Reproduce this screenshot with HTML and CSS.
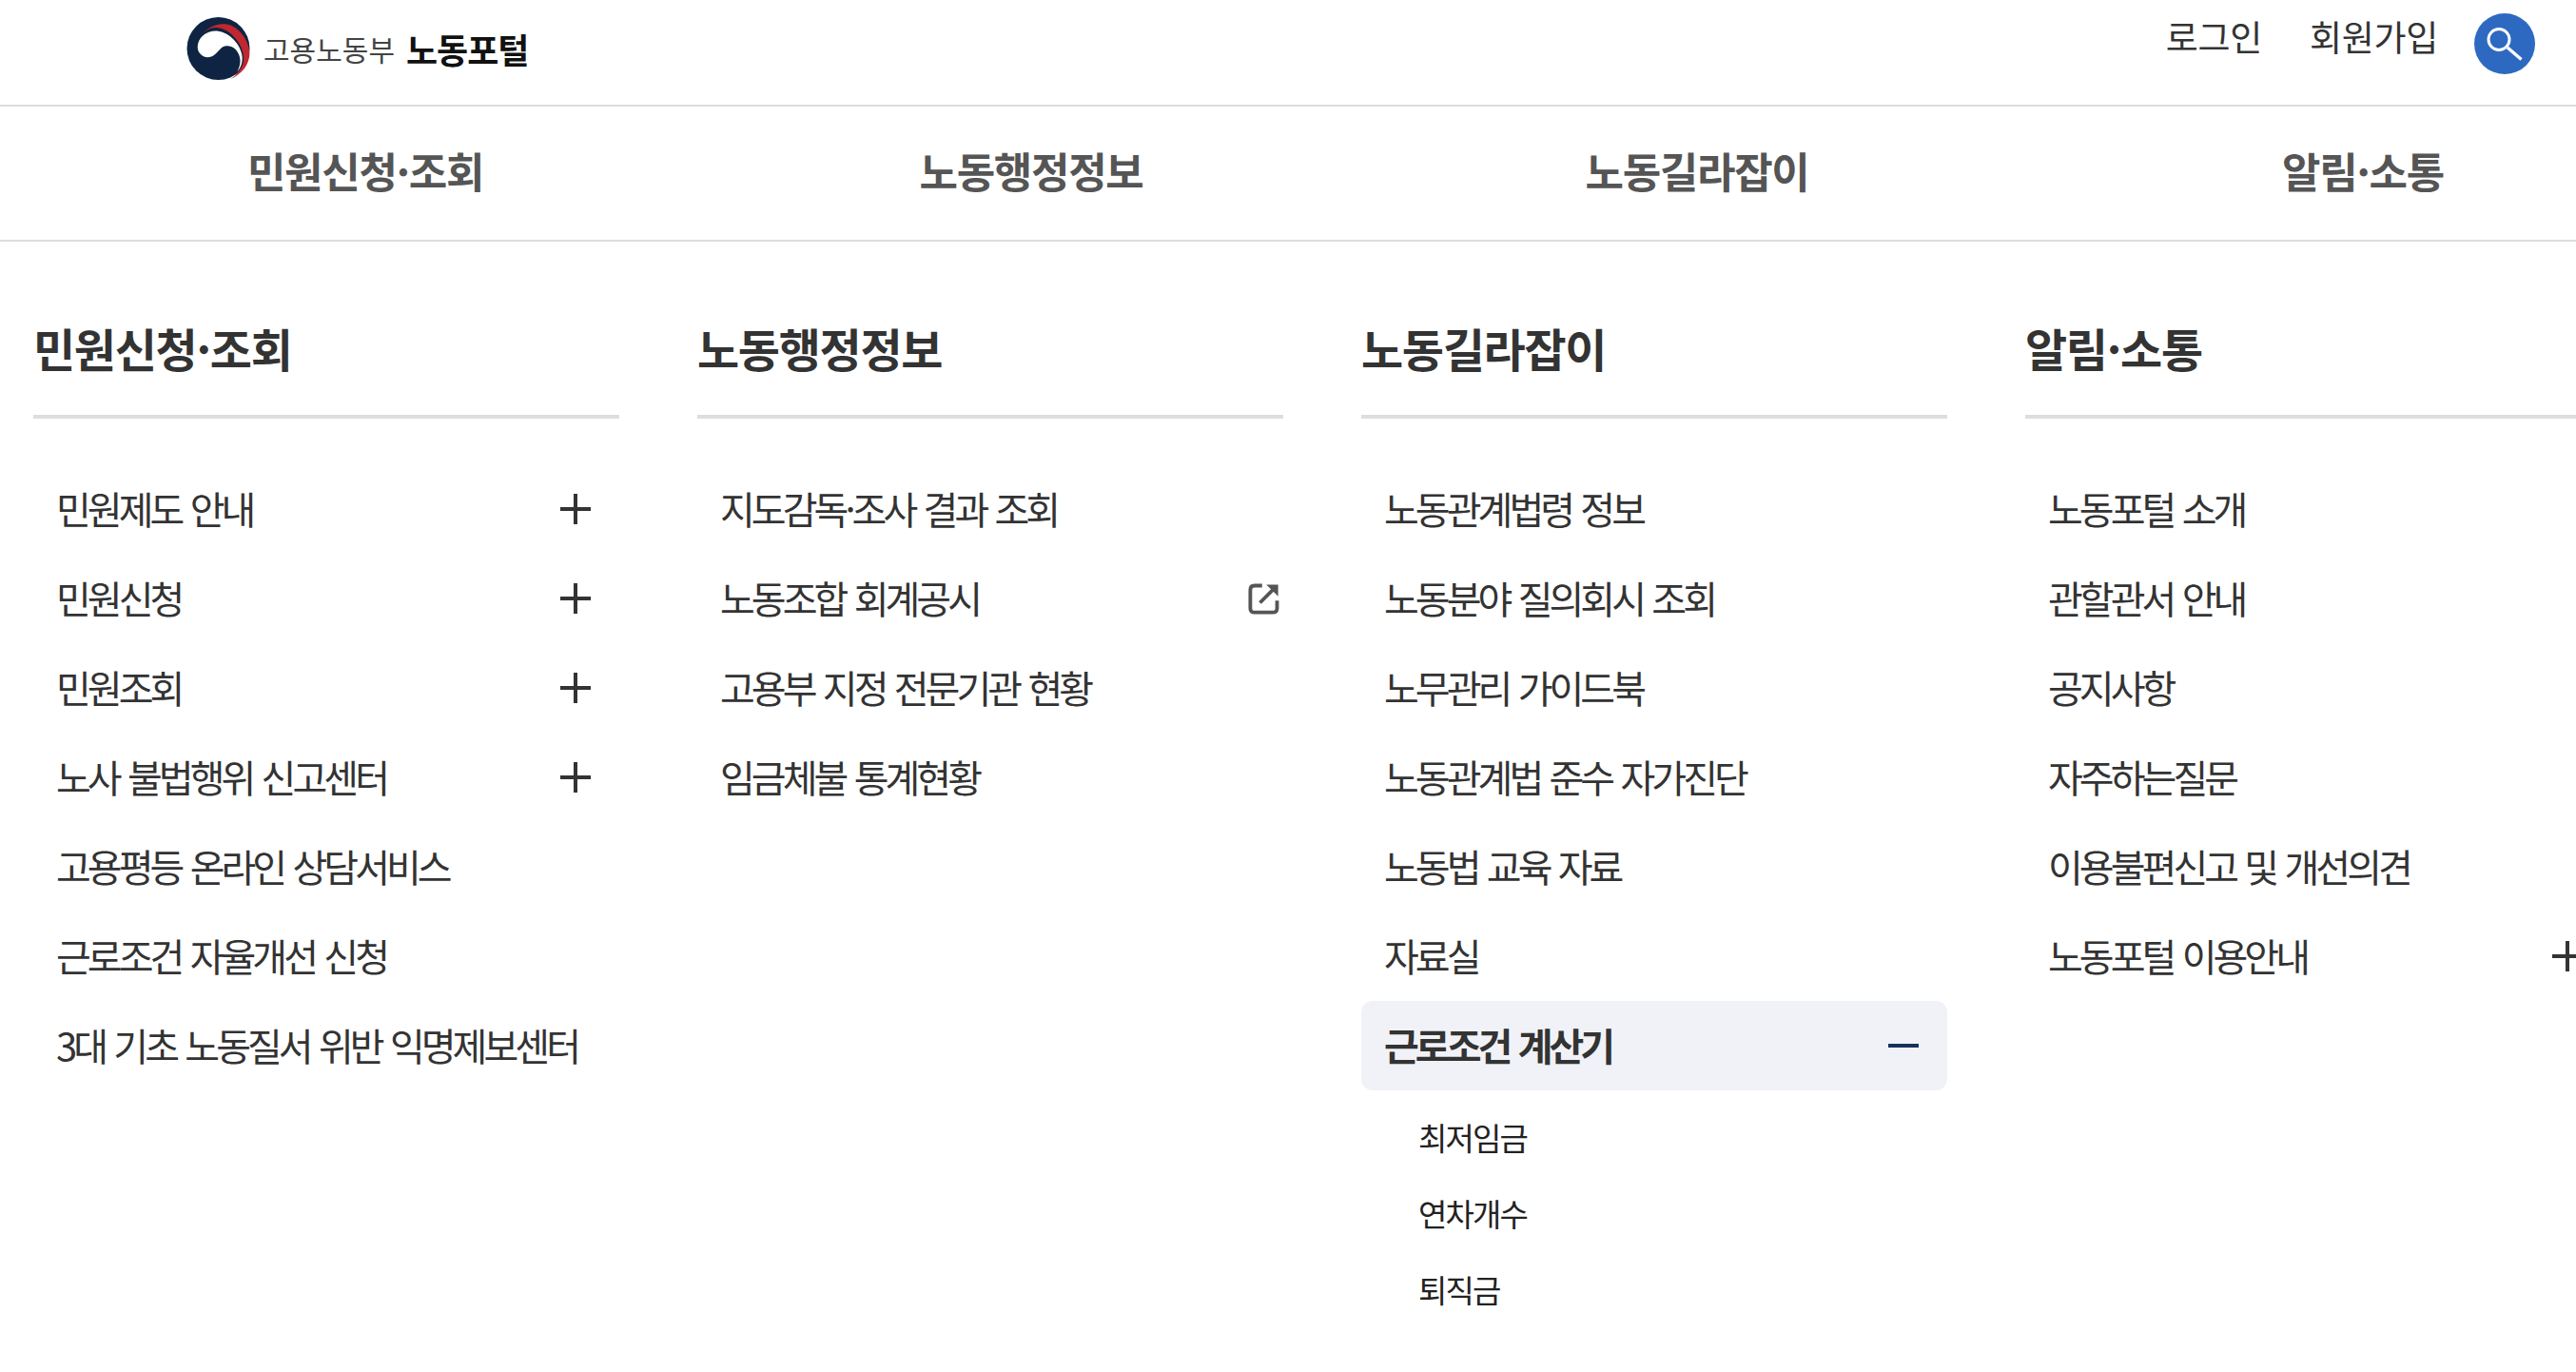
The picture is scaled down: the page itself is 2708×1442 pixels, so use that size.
FILE: index.html
```html
<!DOCTYPE html>
<html lang="ko">
<head>
<meta charset="UTF-8">
<title>노동포털</title>
<link rel="stylesheet" href="styles.css">
</head>
<body>
	<header class="top">
		<a class="logo">
			<svg class="logo-mark" viewBox="0 0 100 100">
				<circle cx="50" cy="50" r="50" fill="#0e2442"/>
				<path d="M17 37C27 17 52 5 72 14C92 24 103 50 99 65C96 80 85 92 69 99C84 88 92 76 90 62C88 42 70 20 50 17C36 15 24 24 17 37Z" fill="#c0282d"/>
				<path d="M17 48C17 32 32 21 48 22C68 24 86 44 88 62C89 72 86 80 80 87C85 78 87 68 82 58C78 49 70 45 62 46C54 47 50 56 44 60C38 65 29 65 24 61C19 57 17 53 17 48Z" fill="#fff"/>
			</svg>
			<span class="logo-org">고용노동부</span>
			<span class="logo-name">노동포털</span>
		</a>
		<div class="util">
			<a class="util-login">로그인</a>
			<a class="util-join">회원가입</a>
			<button class="search-btn">
				<svg viewBox="0 0 64 64" width="64" height="64">
					<circle cx="26" cy="27.5" r="11" fill="none" stroke="#fff" stroke-width="3"/>
					<path d="M35 36L49.5 48.5" stroke="#fff" stroke-width="3.4" fill="none"/>
				</svg>
			</button>
		</div>
	</header>

	<nav class="gnb">
		<a>민원신청·조회</a>
		<a>노동행정정보</a>
		<a>노동길라잡이</a>
		<a>알림·소통</a>
	</nav>

	<main class="sitemap">
		<section class="col">
			<h2>민원신청·조회</h2>
			<ul>
				<li class="more">민원제도 안내</li>
				<li class="more">민원신청</li>
				<li class="more">민원조회</li>
				<li class="more">노사 불법행위 신고센터</li>
				<li>고용평등 온라인 상담서비스</li>
				<li>근로조건 자율개선 신청</li>
				<li>3대 기초 노동질서 위반 익명제보센터</li>
			</ul>
		</section>
		<section class="col">
			<h2>노동행정정보</h2>
			<ul>
				<li>지도감독·조사 결과 조회</li>
				<li>노동조합 회계공시
					<svg class="ext" viewBox="0 0 32 32">
						<path d="M14 4H7Q3 4 3 8V25Q3 29 7 29H24Q28 29 28 25V18" fill="none" stroke="#555" stroke-width="3.4"/>
						<path d="M12 20L27 5" fill="none" stroke="#555" stroke-width="3.4"/>
						<path d="M18 3H29V14Z" fill="#555"/>
					</svg>
				</li>
				<li>고용부 지정 전문기관 현황</li>
				<li>임금체불 통계현황</li>
			</ul>
		</section>
		<section class="col">
			<h2>노동길라잡이</h2>
			<ul>
				<li>노동관계법령 정보</li>
				<li>노동분야 질의회시 조회</li>
				<li>노무관리 가이드북</li>
				<li>노동관계법 준수 자가진단</li>
				<li>노동법 교육 자료</li>
				<li>자료실</li>
				<li class="open">근로조건 계산기</li>
			</ul>
			<ul class="sub">
				<li>최저임금</li>
				<li>연차개수</li>
				<li>퇴직금</li>
			</ul>
		</section>
		<section class="col">
			<h2>알림·소통</h2>
			<ul>
				<li>노동포털 소개</li>
				<li>관할관서 안내</li>
				<li>공지사항</li>
				<li>자주하는질문</li>
				<li>이용불편신고 및 개선의견</li>
				<li class="more">노동포털 이용안내</li>
			</ul>
		</section>
	</main>
</body>
</html>
```

FILE: styles.css
```css
* {
	box-sizing: border-box;
}
html, body {
	margin: 0;
	height: 100%;
	overflow: hidden;
}
body {
	background: #fff;
	color: #333;
	font-family: "Noto Sans CJK KR", "Noto Sans", sans-serif;
}
ul {
	list-style: none;
	margin: 0;
	padding: 0;
}

/* top bar */
.top {
	height: 112px;
	border-bottom: 2px solid #ddd;
	display: flex;
	justify-content: space-between;
	padding: 0 43px 0 196px;
}
.logo {
	display: flex;
	align-items: center;
	height: 102px;
}
.logo-mark {
	width: 67px;
	height: 66px;
	margin-right: 14px;
}
.logo-org {
	font-size: 30px;
	color: #444;
	margin-right: 12px;
}
.logo-name {
	font-size: 36px;
	font-weight: 700;
	letter-spacing: -1px;
	color: #111;
}
.util {
	display: flex;
	align-items: flex-start;
	font-size: 37px;
	letter-spacing: -0.3px;
	line-height: 76px;
}
.util-login {
	margin-right: 50px;
}
.util-join {
	margin-right: 38px;
}
.search-btn {
	width: 64px;
	height: 64px;
	margin-top: 14px;
	border: 0;
	border-radius: 50%;
	background: #2d69c1;
	padding: 0;
}
.search-btn svg {
	display: block;
}

/* main menu */
.gnb {
	height: 142px;
	border-bottom: 2px solid #ddd;
	display: flex;
	padding-left: 34px;
}
.gnb a {
	flex: 0 0 700px;
	text-align: center;
	font-size: 44px;
	font-weight: 700;
	letter-spacing: -1.3px;
	line-height: 134px;
	color: #555;
}

/* sitemap columns */
.sitemap {
	display: flex;
	gap: 82px;
	padding: 0 0 0 35px;
}
.col {
	flex: 0 0 616px;
}
.col h2 {
	margin: 0 0 48px;
	height: 186px;
	padding-top: 73px;
	border-bottom: 4px solid #ddd;
	font-size: 48px;
	font-weight: 700;
	letter-spacing: -1.3px;
	line-height: 76px;
}
.col li {
	height: 94px;
	line-height: 90px;
	padding: 0 30px 3px 24px;
	font-size: 40px;
	letter-spacing: -3.95px;
	word-spacing: 2px;
	display: flex;
	align-items: center;
	justify-content: space-between;
}
.col li.more::after {
	content: "";
	width: 32px;
	height: 32px;
	margin-top: 3px;
	background:
		linear-gradient(#333, #333) center / 32px 4px no-repeat,
		linear-gradient(#333, #333) center / 4px 32px no-repeat;
}
.col li.open {
	background: #f1f2f7;
	border-radius: 12px;
	font-weight: 700;
}
.col li.open::after {
	content: "";
	width: 32px;
	height: 4px;
	margin-top: 3px;
	background: #16335f;
}
.ext {
	width: 36px;
	height: 36px;
	margin: 3px -28px 0 0;
}
.col .sub {
	padding: 9px 0 0 36px;
}
.col .sub li {
	height: 80px;
	line-height: 80px;
	padding: 0 0 0 24px;
	font-size: 33px;
	letter-spacing: -1.9px;
	word-spacing: 0;
	color: #222;
}
```
